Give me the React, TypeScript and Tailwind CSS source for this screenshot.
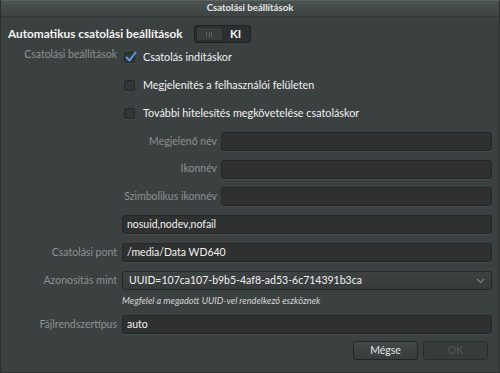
import React from "react";

const font = { fontFamily: "Lato, 'Open Sans', sans-serif" };

function Check({ checked }: { checked?: boolean }) {
  return (
    <div className="relative w-[11px] h-[11px] rounded-[2px] bg-[#313535] border border-[#242727] shadow-[0_1px_0_rgba(255,255,255,0.05)]">
      {checked && (
        <svg className="absolute left-[-1px] top-[-3px]" width="14" height="14" viewBox="0 0 14 14">
          <path d="M2.5 7.5 L5.5 10.5 L11.5 2.5" fill="none" stroke="#5b9de3" strokeWidth="2" strokeLinecap="round" strokeLinejoin="round" />
        </svg>
      )}
    </div>
  );
}

function Input({ value, className = "" }: { value?: string; className?: string }) {
  return (
    <div
      className={
        "h-[19px] rounded-[3px] bg-[#2f3030] border border-[#252727] shadow-[0_1px_0_rgba(255,255,255,0.06)] flex items-center px-[4px] text-[10.5px] text-[#f2f2f2] " +
        className
      }
    >
      {value}
    </div>
  );
}

export default function App() {
  return (
    <div
      className="w-[500px] h-[373px] bg-[#3b4040] border-x border-b border-[#2c3030] flex flex-col overflow-hidden"
      style={font}
    >
      {/* title bar */}
      <div className="h-[17px] shrink-0 bg-gradient-to-b from-[#4a5251] to-[#3d4443] border-t border-[#5a6262] border-b border-b-[#333838] flex items-center justify-center text-[9.6px] font-bold text-[#e6e6e6]">
        Csatolási beállítások
      </div>

      {/* header row */}
      <div className="mt-[8px] h-[18px] flex items-center pl-[7px]">
        <span className="text-[11.8px] font-bold text-[#f4f4f4]">Automatikus csatolási beállítások</span>
        <div className="ml-[11px] w-[57px] h-[18px] rounded-[3px] bg-[#2c2f2f] border border-[#1f2222] flex items-center p-[1px]">
          <div className="w-[27px] h-full rounded-[2px] bg-[#393d3d] border border-[#2a2d2d] flex items-center justify-center gap-[1.5px]">
            <span className="w-px h-[5px] bg-[#5b6060]" />
            <span className="w-px h-[5px] bg-[#5b6060]" />
            <span className="w-px h-[5px] bg-[#5b6060]" />
          </div>
          <div className="flex-1 text-center text-[11.5px] font-bold text-[#f4f4f4]">KI</div>
        </div>
      </div>

      {/* checkbox section */}
      <div className="grid grid-cols-[116px_1fr] gap-x-[5px]">
        <div className="h-[28px] flex items-center justify-end text-[10.5px] text-[#8d9292] pb-[4px]">Csatolási beállítások</div>
        <div className="flex flex-col">
          {[
            ["Csatolás indításkor", true],
            ["Megjelenítés a felhasználói felületen", false],
            ["További hitelesítés megkövetelése csatoláskor", false],
          ].map(([t, c]) => (
            <div key={t as string} className="h-[28px] flex items-center pl-[2px] gap-[8px]">
              <Check checked={c as boolean} />
              <span className="text-[10.8px] text-[#f2f2f2]">{t as string}</span>
            </div>
          ))}
        </div>
      </div>

      {/* inputs */}
      <div className="mt-[5px] grid grid-cols-[116px_1fr] gap-x-[5px] pr-[7px] text-[10.5px]">
        <div />
        <div className="grid grid-cols-[95px_1fr] gap-x-[4px] gap-y-[8.5px] items-center">
          <div className="text-right text-[#8d9292]">Megjelenő név</div>
          <Input />
          <div className="text-right text-[#8d9292]">Ikonnév</div>
          <Input />
          <div className="text-right text-[#8d9292]">Szimbolikus ikonnév</div>
          <Input />
        </div>

        <div className="mt-[9px]" />
        <Input value="nosuid,nodev,nofail" className="mt-[9px]" />

        <div className="mt-[9px] h-[19px] flex items-center justify-end text-[#8d9292]">Csatolási pont</div>
        <Input value="/media/Data WD640" className="mt-[9px]" />

        <div className="mt-[9px] h-[19px] flex items-center justify-end text-[#8d9292]">Azonosítás mint</div>
        <div className="mt-[9px] h-[19px] rounded-[3px] bg-gradient-to-b from-[#3d4242] to-[#363a3a] border border-[#252828] flex items-center pl-[6px] pr-[6px] text-[#f2f2f2]">
          <span className="flex-1">UUID=107ca107-b9b5-4af8-ad53-6c714391b3ca</span>
          <svg width="9" height="6" viewBox="0 0 9 6">
            <path d="M1 1 L4.5 4.5 L8 1" fill="none" stroke="#7b8080" strokeWidth="1.2" />
          </svg>
        </div>

        <div />
        <div className="h-[22px] flex items-center text-[9.2px] italic text-[#d6d6d6]">
          Megfelel a megadott UUID-vel rendelkező eszköznek
        </div>

        <div className="mt-[3px] h-[19px] flex items-center justify-end text-[#8d9292]">Fájlrendszertípus</div>
        <Input value="auto" className="mt-[3px]" />
      </div>

      {/* buttons */}
      <div className="mt-[7px] flex justify-end gap-[5px] pr-[11px]">
        <div className="w-[65px] h-[19px] rounded-[3px] bg-gradient-to-b from-[#434848] to-[#383c3c] border border-[#232626] flex items-center justify-center text-[10.5px] text-[#e4e4e4]">
          Mégse
        </div>
        <div className="w-[65px] h-[19px] rounded-[3px] bg-[#373b3b] border border-[#2a2d2d] flex items-center justify-center text-[10.5px] text-[#555a5a]">
          OK
        </div>
      </div>
    </div>
  );
}
